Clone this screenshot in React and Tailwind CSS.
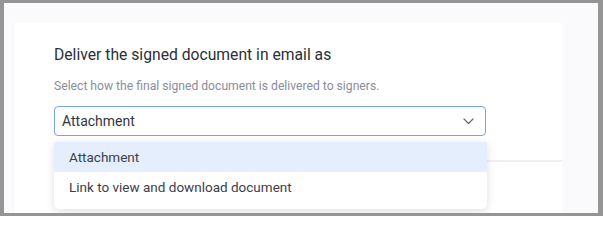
import React from "react";

export default function App() {
  return (
    <div className="w-[603px] h-[216px] bg-[#959595] pt-[3px] pl-[4px] pr-[5px] pb-[3px] overflow-hidden" style={{ fontFamily: "Roboto, 'Noto Sans', sans-serif" }}>
      <div className="h-full bg-[#fafafc] pl-[11px] pt-[20px] pr-[36px] overflow-hidden">
        <div className="h-[300px] bg-white pl-[39px] pt-[22px]">
          <h2 className="text-[15.7px] leading-[20px] text-[#2b2f38] font-normal">Deliver the signed document in email as</h2>
          <p className="mt-[13px] text-[12.15px] leading-[16px] text-[#8a8d9c]">Select how the final signed document is delivered to signers.</p>
          <div className="relative mt-[12px] w-[432px]">
            <div className="h-[30px] border border-[#7aa2ee] rounded-[4px] flex items-center justify-between pl-[7px] pr-[11px]">
              <span className="text-[14px] leading-[20px] text-[#333640]">Attachment</span>
              <svg width="11" height="7" viewBox="0 0 11 7" fill="none" className="mt-[1px]">
                <path d="M1 1l4.5 4.5L10 1" stroke="#666a73" strokeWidth="1.2" strokeLinecap="round" strokeLinejoin="round" />
              </svg>
            </div>
            <div className="absolute z-10 left-0 top-[36px] w-[433px] bg-white rounded-b-[5px] shadow-[0_2px_8px_rgba(0,0,0,0.13)] pb-[7px]">
              <div className="h-[30px] flex items-center pl-[15px] bg-[#e4eefc] text-[13.5px] text-[#3d4049]">Attachment</div>
              <div className="h-[30px] flex items-center pl-[15px] text-[13.5px] text-[#3d4049]">Link to view and download document</div>
            </div>
          </div>
          <div className="mt-[24px] border-t-2 border-[#f0f0f2]"></div>
        </div>
      </div>
    </div>
  );
}
